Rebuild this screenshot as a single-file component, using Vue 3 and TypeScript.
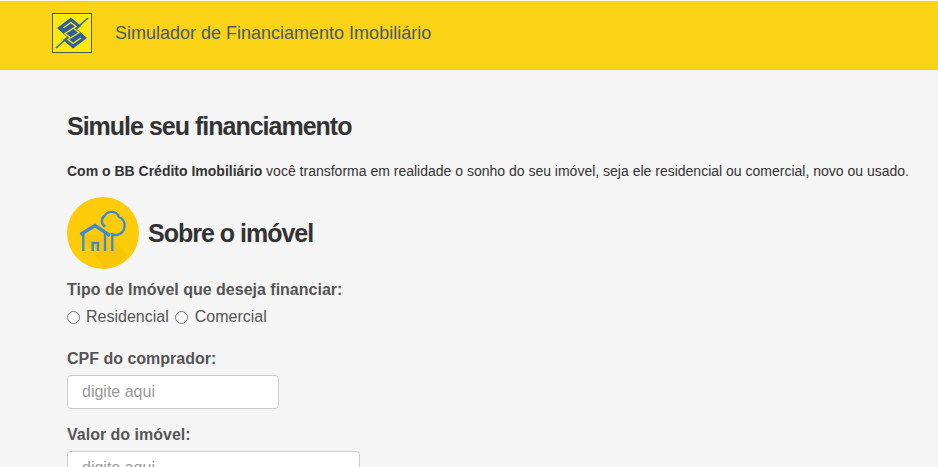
<script setup lang="ts">
const title = 'Simule seu financiamento'
</script>

<template>
  <div class="page">
    <header class="top">
      <svg class="logo" width="40" height="40" viewBox="0 0 40 40">
        <rect x="0.5" y="0.5" width="39" height="39" fill="#fbe80f" stroke="#4a5a50" />
        <path d="M36 5 L27 13 M4 35 L13 27" fill="none" stroke="#2c5f9e" stroke-width="1.500" />
        <path d="M5 15 L19 4.500 L29 13 L25 16 L35 25 L21 35.500 L11 27 L15 24 Z" fill="#2c5f9e" />
        <g fill="none" stroke="#fbe80f" stroke-width="1.400">
          <path d="M11 15 L19 9.500 L24 13.500 L13 20.500 L18 24.500" />
          <path d="M29 25 L21 30.500 L16 26.500 L27 19.500 L22 15.500" />
        </g>
      </svg>
      <span class="brand">Simulador de Financiamento Imobiliário</span>
    </header>
    <main class="content">
      <h1>{{ title }}</h1>
      <p class="intro"><b>Com o BB Crédito Imobiliário</b> você transforma em realidade o sonho do seu imóvel, seja ele residencial ou comercial, novo ou usado.</p>
      <div class="section">
        <svg class="badge" width="72" height="72" viewBox="0 0 72 72">
          <circle cx="36" cy="36" r="36" fill="#fdcb08" />
          <path d="M13 38 L44 38 L60 58 A36 36 0 0 1 38 72 Z" fill="#f4c006" opacity="0.5" />
          <g fill="none" stroke="#3a8ad8" stroke-width="2.300">
            <path d="M38.500 29.500 A6 6 0 0 1 37.500 19 A8 8 0 0 1 52 20 A9.500 9.500 0 0 1 50 38 H45.300" />
            <path d="M45.300 36 V54 M16.300 36 V54 M38 36 V54" />
            <path d="M25.700 54 V46 H31 V54" stroke-width="2.400" />
          </g>
          <path d="M13.500 37.500 L28 28.500 L43 38.500" fill="none" stroke="#3a8ad8" stroke-width="3.400" />
        </svg>
        <h2>Sobre o imóvel</h2>
      </div>
      <div class="field first">
        <label class="lbl">Tipo de Imóvel que deseja financiar:</label>
        <div class="radios">
          <input id="r" type="radio" name="t" /><label for="r">Residencial</label>
          <input id="c" class="second" type="radio" name="t" /><label for="c">Comercial</label>
        </div>
      </div>
      <div class="field cpf">
        <label class="lbl">CPF do comprador:</label>
        <input class="txt short" placeholder="digite aqui" />
      </div>
      <div class="field valor">
        <label class="lbl">Valor do imóvel:</label>
        <input class="txt long" placeholder="digite aqui" />
      </div>
    </main>
  </div>
</template>

<style>
html, body { margin: 0; height: 467px; overflow: hidden; background: #f5f5f5; }
</style>

<style scoped>
.page { font-family: "Liberation Sans", Arial, sans-serif; color: #333; background: #f5f5f5; }
.top { height: 70px; background: #fad316; border-top: 1px solid #f5f5f5; display: flex; align-items: center; padding-left: 52px; box-sizing: border-box; padding-bottom: 5px; }
.logo { display: block; }
.brand { margin-left: 23px; font-size: 18px; color: #4a5a6a; }
.content { padding: 0 0 0 67px; }
h1 { margin: 0; padding-top: 40px; font-size: 25px; line-height: 32px; font-weight: 700; letter-spacing: -1px; color: #333; }
.intro { margin: 19px 0 0; font-size: 14px; line-height: 20px; color: #333; white-space: nowrap; }
.section { display: flex; align-items: center; margin-top: 16px; }
.badge { display: block; }
h2 { margin: 0 0 0 9px; font-size: 25px; font-weight: 700; letter-spacing: -1px; color: #333; }
.field { display: flex; flex-direction: column; align-items: flex-start; }
.first { margin-top: 11px; }
.lbl { font-size: 16px; font-weight: 700; color: #555; line-height: 20px; }
.radios { display: flex; align-items: center; font-size: 16px; color: #555; line-height: 20px; margin-top: 7px; }
.radios input { margin: 0 6px 0 0; width: 13px; height: 13px; }
.radios input.second { margin-right: 7px; }
.radios label { margin-right: 6px; }
.cpf { margin-top: 22px; }
.valor { margin-top: 16px; }
.txt { box-sizing: border-box; height: 34px; margin-top: 6px; padding: 6px 14px; font: 16px "Liberation Sans", Arial, sans-serif; background: #fff; border: 1px solid #ccc; border-radius: 4px; outline: none; color: #555; }
.txt::placeholder { color: #999; }
.short { width: 212px; }
.long { width: 293px; }
</style>
